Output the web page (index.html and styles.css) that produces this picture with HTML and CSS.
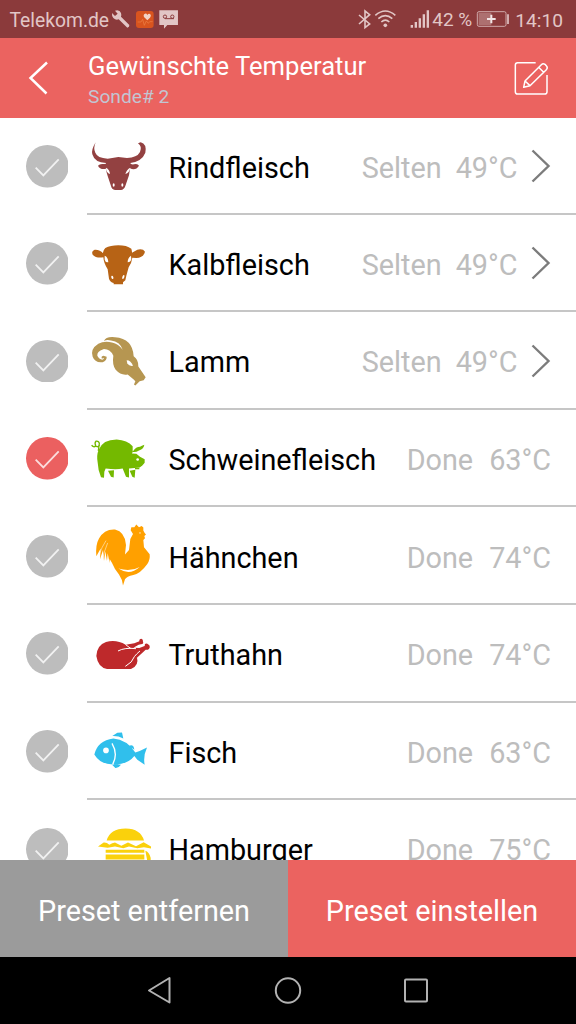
FILE: index.html
```html
<!DOCTYPE html>
<html lang="de">
<head>
<meta charset="utf-8">
<title>Gewünschte Temperatur</title>
<link rel="stylesheet" href="styles.css">
</head>
<body>
<svg width="0" height="0" class="defs">
  <symbol id="check" viewBox="0 0 128 128"><circle cx="64" cy="64" r="64" fill="currentColor"/><path d="M29 68 52 91 98 43" fill="none" stroke="#fff" stroke-opacity=".78" stroke-width="5.500"/></symbol>
  <symbol id="chevron" viewBox="0 0 20 34"><path d="M1.5 1.5 17.5 17 1.5 32.500" fill="none" stroke="#7c7c7c" stroke-width="2.400"/></symbol>
</svg>
<div class="phone">
  <div class="status">
    <span class="carrier">Telekom.de</span>
    <svg class="status-left" viewBox="330 0 220 114">
      <path d="M345 32Q359 28 363 39Q365 45 363 50L388 75Q389 81 382 83L356 58Q347 61 340 54Q335 48 336 39L345 48 353 41Z" fill="#e2c6c6"/>
      <rect x="408" y="33" width="53" height="51" rx="9" fill="#d9541e"/>
      <path d="M413 66H423L428 58 433 76 439 63 445 70 449 65H458" fill="none" stroke="#ed8247" stroke-width="2"/>
      <path d="M442 61 432 51Q429 43 435 41Q440 40 442 45Q445 40 450 42Q455 46 450 53Z" fill="#f3d4c5"/>
      <path d="M478 31H534V75H502L492 86V75H478Z" fill="#e2c6c6"/>
      <g fill="none" stroke="#8b3a3b" stroke-width="3"><circle cx="495" cy="50" r="5"/><circle cx="517" cy="50" r="5"/><path d="M495 56H522"/></g>
    </svg>
    <svg class="status-radio" viewBox="205 0 225 114">
      <g fill="none" stroke="#e2c6c6" stroke-width="4.800"><path d="M214 45 246 72 232 83V33L246 44 214 72"/><path d="M263 46Q293 20 323 46M272 56Q293 38 314 56M281 66Q293 55 305 66"/></g>
      <circle cx="293" cy="76" r="5.500" fill="#e2c6c6"/>
      <path d="M369 75H376V83H369ZM381 66H388V83H381ZM393 55H400V83H393ZM405 43H412V83H405ZM417 31H424V83H417Z" fill="#e2c6c6"/>
    </svg>
    <span class="percent">42 %</span>
    <svg class="battery" viewBox="566 0 102 114">
      <rect x="570" y="35" width="86" height="44" rx="5" fill="none" stroke="#cfa9a9" stroke-width="3"/><path d="M574 38H612V76H574Z" fill="#ad7070"/><path d="M599 57H625M612 44V70" stroke="#f2e5e5" stroke-width="6"/><path d="M662 43V72" stroke="#e2c6c6" stroke-width="5"/>
    </svg>
    <span class="clock">14:10</span>
  </div>
  <header class="header">
    <svg class="back" viewBox="0 0 20 34"><path d="M19 1.500 2.500 17 18.500 32.500" fill="none" stroke="#fff" stroke-width="2.500"/></svg>
    <div class="titles"><h1>Gewünschte Temperatur</h1><p>Sonde# 2</p></div>
    <svg class="edit" viewBox="678 180 108 108">
      <g fill="none" stroke="#fff" stroke-width="4.500" stroke-linejoin="round"><path d="M743 188H689Q682 188 682 195V275Q682 282 689 282H770Q777 282 777 275V225"/><path d="M707 262 711 243 760 194Q765 189 771 193L776 199Q780 204 775 209L726 257ZM711 243 726 257M752 202 767 217"/></g>
    </svg>
  </header>
  <main class="list">
    <div class="row first">
      <svg class="check"><use href="#check"/></svg>
      <svg class="animal" viewBox="234 -21 198 289.800" fill="#934141">
        <path d="M257 52Q243 75 247 88Q254 113 288 114Q290 118 279 117Q269 116 264 122Q269 134 286 132L289 130Q288 141 293 153L303 183Q305 193 315 195H333Q342 194 346 183L357 151 360 130Q377 138 387 122Q383 115 372 118Q361 119 361 114Q396 109 406 83Q411 57 392 52L384 55Q397 64 390 81Q381 98 351 99L325 96 293 101Q262 99 256 83Q249 71 257 52Z"/>
        <g fill="#fff"><path d="M288 128Q299 133 300 147Q288 143 288 128ZM361 128Q350 133 346 147Q358 144 361 128Z"/><ellipse cx="311" cy="180" rx="3" ry="5"/><ellipse cx="337" cy="180" rx="3" ry="5"/></g>
      </svg>
      <div class="line"><span class="name">Rindfleisch</span><span class="level">Selten</span><span class="temp">49°C</span><svg class="chevron"><use href="#chevron"/></svg></div>
    </div>
    <div class="row">
      <svg class="check"><use href="#check"/></svg>
      <svg class="animal" viewBox="234 -31 198 292.800" fill="#b76315">
        <path d="M286 68Q301 60 325 60Q350 60 364 70Q366 76 366 82L382 73Q399 69 405 79Q401 97 379 98L367 97Q365 113 356 126L349 151 346 165 339 171V177H311V173Q300 170 297 160L293 132Q281 113 280 96Q258 99 248 88Q243 77 254 73Q270 72 279 84Q278 76 286 68Z"/>
        <g fill="#fff"><path d="M284 91Q294 94 295 111Q286 112 284 103ZM363 91Q353 97 353 111Q362 111 364 102Z"/><ellipse cx="307" cy="156" rx="3" ry="5" transform="rotate(-20 307 156)"/><ellipse cx="340" cy="155" rx="3" ry="6" transform="rotate(20 340 155)"/></g>
      </svg>
      <div class="line"><span class="name">Kalbfleisch</span><span class="level">Selten</span><span class="temp">49°C</span><svg class="chevron"><use href="#chevron"/></svg></div>
    </div>
    <div class="row">
      <svg class="check"><use href="#check"/></svg>
      <svg class="animal" viewBox="234 -23.400 198 292.800" fill="#b69651">
        <path d="M282 64Q287 49 315 52Q368 56 371 109Q386 119 385 140L407 172 401 181 389 184 376 197 372 194 376 184 371 179 353 164Q333 168 317 150Q306 135 310 108Q301 87 280 88Q260 94 262 108Q267 119 277 120Q283 118 281 114L276 117Q272 110 280 108L290 111Q291 123 278 127Q255 130 248 111Q240 88 265 72Q282 63 306 68Q326 72 338 90Q330 65 303 62Q289 59 282 64Z"/>
        <path d="M350 121Q363 121 369 138Q358 140 352 131Z" fill="#fff"/>
      </svg>
      <div class="line"><span class="name">Lamm</span><span class="level">Selten</span><span class="temp">49°C</span><svg class="chevron"><use href="#chevron"/></svg></div>
    </div>
    <div class="row done">
      <svg class="check selected"><use href="#check"/></svg>
      <svg class="animal" viewBox="234 -24.600 198 292.800" fill="#74b900">
        <path d="M266 95Q278 64 320 64Q352 66 368 84V101Q377 103 387 97Q402 92 403 80Q395 83 390 86Q378 86 369 99L366 106 379 107 390 116 404 123V134L397 142 389 148 357 151V178L348 176 338 151Q319 155 287 151L283 161 282 179 273 177Q264 157 263 133Q259 112 266 95ZM294 158 312 156 311 178 303 176ZM359 158 376 155 374 179 367 176Z"/>
        <path d="M265 98 268 76Q267 68 258 69Q253 74 257 82Q263 90 269 80M258 83Q250 89 245 81M375 151H388" fill="none" stroke="#74b900" stroke-width="4"/>
        <circle cx="383" cy="124" r="4" fill="#fff"/>
      </svg>
      <div class="line"><span class="name">Schweinefleisch</span><span class="level">Done</span><span class="temp">63°C</span></div>
    </div>
    <div class="row done">
      <svg class="check"><use href="#check"/></svg>
      <svg class="animal" viewBox="234 -22.800 198 292.800" fill="#ffa000">
        <path d="M259 125Q256 91 267 72Q283 43 315 45Q345 52 348 91L345 120 357 106 361 73 369 58 362 47 364 38H373L379 30 387 38 395 34 400 39V48L404 55 408 60 403 64 405 71 400 76 402 98 419 119Q421 135 412 148Q391 177 370 181Q350 185 345 194L339 213Q337 194 327 180L315 163Q307 145 299 133V145L293 116 291 139 286 111 282 139 279 106 270 134 272 102Z"/>
        <path d="M288 78Q276 96 267 121M293 85Q283 109 278 132" fill="none" stroke="#fff" stroke-width="1.500"/>
        <path d="M325 162Q362 173 389 157Q359 184 325 162Z" fill="#fff"/><circle cx="390" cy="55" r="2" fill="#fff"/>
      </svg>
      <div class="line"><span class="name">Hähnchen</span><span class="level">Done</span><span class="temp">74°C</span></div>
    </div>
    <div class="row done">
      <svg class="check"><use href="#check"/></svg>
      <svg class="animal" viewBox="234 -21 198 292.800" fill="#be292b">
        <path d="M259 132Q261 99 288 90Q319 82 347 98L373 94 388 88Q387 80 394 80Q400 81 399 89Q402 95 393 97L386 98 370 107 388 108 404 102Q403 93 412 95L418 100Q422 109 414 113H407L381 137Q388 160 363 171H291Q264 166 259 132Z"/>
        <path d="M324 117Q344 106 378 110M347 98 363 110M346 163Q368 151 373 134Q379 126 390 117" fill="none" stroke="#fff" stroke-width="3"/>
      </svg>
      <div class="line"><span class="name">Truthahn</span><span class="level">Done</span><span class="temp">74°C</span></div>
    </div>
    <div class="row done">
      <svg class="check"><use href="#check"/></svg>
      <svg class="animal" viewBox="234 -22.200 198 292.800" fill="#30bfec">
        <path d="M253 132Q263 90 310 84Q350 87 376 126L389 122 411 111Q399 137 404 163L382 148 373 137Q354 162 314 162Q272 164 253 132ZM307 77 322 67 336 66 340 84Q324 76 307 77ZM357 106Q371 100 373 118ZM307 164Q322 160 333 163Q325 174 316 173Z"/>
        <path d="M306 99Q325 131 308 162" fill="none" stroke="#fff" stroke-width="4"/><circle cx="288" cy="120" r="8.500" fill="#fff"/>
      </svg>
      <div class="line"><span class="name">Fisch</span><span class="level">Done</span><span class="temp">63°C</span></div>
    </div>
    <div class="row done">
      <svg class="check"><use href="#check"/></svg>
      <svg class="animal" viewBox="234 .6 198 292.800" fill="#fad10c">
        <path d="M290 122Q300 86 347 86Q392 87 402 122ZM264 140 281 128Q290 127 298 135Q307 129 315 128L334 138 354 128 378 139 401 127 423 140V146L402 142 382 145 357 140 340 145 315 140 293 144ZM287 150H403V159H287ZM287 164H403V179H287ZM406 153Q417 156 422 174V184H412Z"/>
      </svg>
      <div class="line"><span class="name">Hamburger</span><span class="level">Done</span><span class="temp">75°C</span></div>
    </div>
  </main>
  <div class="actions"><button class="remove">Preset entfernen</button><button class="apply">Preset einstellen</button></div>
  <nav class="nav">
    <svg viewBox="0 0 28 28"><path d="M23.500 2V26.500L3 14.500Z"/></svg>
    <svg viewBox="0 0 28 28"><circle cx="14" cy="14.500" r="12.200"/></svg>
    <svg viewBox="0 0 28 28"><rect x="3" y="3.500" width="22" height="22" rx="1"/></svg>
  </nav>
</div>
</body>
</html>
```

FILE: styles.css
```css
* { box-sizing: border-box; }
body { margin: 0; font-family: Roboto, "Noto Sans", sans-serif; }
.defs { display: block; }
svg { flex: none; }
.phone { width: 576px; height: 1024px; display: flex; flex-direction: column; overflow: hidden; background: #fff; }
.status { height: 38px; flex: none; display: flex; align-items: center; background: #8b3a3b; color: #e2c6c6; font-size: 19.5px; line-height: 36px; white-space: nowrap; }
.carrier { width: 100px; margin-left: 9.500px; padding-top: 3px; font-size: 19.3px; }
.status-left { width: 73.3px; height: 38px; }
.status-radio { width: 75px; height: 38px; margin-left: 173.500px; }
.percent { width: 45px; margin-left: 1px; padding-top: 1px; font-size: 19px; }
.battery { width: 34px; height: 38px; margin-left: -1px; }
.clock { margin-left: 5px; padding-top: 3px; font-size: 19.2px; }
.header { height: 80px; flex: none; display: flex; align-items: center; background: #eb6360; color: #fff; }
.back { width: 20px; height: 34px; margin-left: 28px; }
.titles { width: 426px; padding: 4px 0 0 40px; }
.titles h1 { margin: 0; font-size: 25.6px; line-height: 32px; font-weight: 400; white-space: nowrap; }
.titles p { margin: 0; padding-top: 2px; font-size: 19.2px; line-height: 26px; color: #c2c5d2; }
.edit { width: 36px; height: 36px; margin-left: 40px; }
.list { height: 742px; flex: none; overflow: hidden; }
.row { height: 97.6px; display: flex; align-items: center; padding-left: 25.7px; }
.row.first { height: 96.6px; }
.check { width: 42.7px; height: 42.7px; color: #bdbdbd; }
.check.selected { color: #eb6060; }
.animal { width: 66px; height: 100%; margin-left: 19.6px; margin-right: -66.5px; }
.line { flex: 1; height: 100%; display: flex; align-items: center; padding: 5px 25px 0 81px; border-bottom: 2px solid #c6c6c6; font-size: 28.8px; white-space: nowrap; }
.name { flex: 1; color: #000; }
.level, .temp { color: #bdbdbd; }
.temp { margin-left: 14px; }
.done .temp { margin-left: 16px; }
.chevron { width: 20px; height: 34px; margin: -3px 0 0 13.500px; }
.actions { height: 97px; flex: none; display: grid; grid-template-columns: 1fr 1fr; }
.actions button { border: 0; padding: 4px 0 0; font: 28.8px Roboto, "Noto Sans", sans-serif; color: #fff; }
.remove { background: #9b9b9b; }
.apply { background: #eb6360; }
.nav { flex: 1; display: flex; justify-content: center; align-items: center; gap: 100px; padding-bottom: 2px; background: #000; }
.nav svg { width: 28px; height: 28px; fill: none; stroke: #b2b2b2; stroke-width: 2; stroke-linejoin: round; }
```
